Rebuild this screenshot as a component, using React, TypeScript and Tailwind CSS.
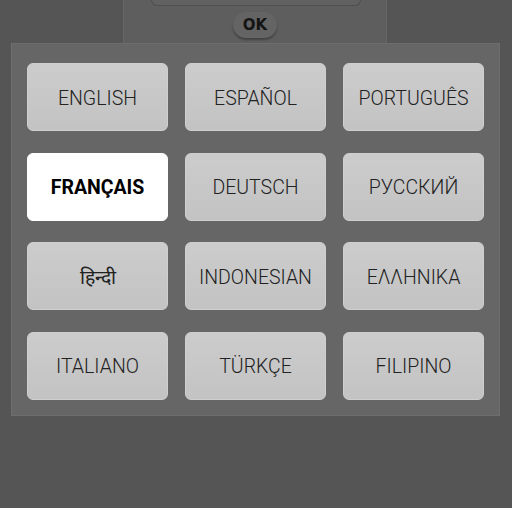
import { useState } from "react";

const languages = [
  "ENGLISH",
  "ESPAÑOL",
  "PORTUGUÊS",
  "FRANÇAIS",
  "DEUTSCH",
  "РУССКИЙ",
  "हिन्दी",
  "INDONESIAN",
  "ΕΛΛΗΝΙΚΑ",
  "ITALIANO",
  "TÜRKÇE",
  "FILIPINO",
];

export default function App() {
  const [selected, setSelected] = useState("FRANÇAIS");

  return (
    <div className="h-[508px] w-[512px] overflow-hidden bg-[#555555] font-['Roboto',sans-serif]">
      {/* dialog behind the picker */}
      <div className="ml-[123px] h-[43px] w-[264px] border-x border-[#666666] bg-[#5e5e5e]">
        <div className="ml-[27px] h-[6px] w-[210px] rounded-b-md border-x border-b border-[#4f4f4f] bg-[#616161]" />
        <div className="mt-[6px] flex justify-center">
          <button
            type="button"
            className="flex h-[26px] w-[44px] items-center justify-center rounded-full bg-[#646464] font-['DejaVu_Sans',sans-serif] text-[15px] font-bold text-[#141414] shadow-[0_2px_2px_rgba(0,0,0,0.3)]"
          >
            OK
          </button>
        </div>
      </div>

      {/* language picker */}
      <div className="ml-[11px] w-[489px] border border-[#6d6d6d] bg-[#666666] px-[15px] pb-[15px] pt-[19px]">
        <div className="grid grid-cols-3 gap-x-[17px] gap-y-[21.5px]">
          {languages.map((lang) => {
            const active = lang === selected;
            return (
              <button
                key={lang}
                type="button"
                onClick={() => setSelected(lang)}
                className={`flex h-[68px] items-center justify-center rounded-[6px] border pt-[3px] text-[19.5px] ${
                  active
                    ? "border-white bg-white font-bold text-black"
                    : "border-[#cfcfcf] bg-gradient-to-b from-[#cccccc] to-[#c3c3c3] font-light text-[#222222]"
                }`}
              >
                {lang}
              </button>
            );
          })}
        </div>
      </div>
    </div>
  );
}
